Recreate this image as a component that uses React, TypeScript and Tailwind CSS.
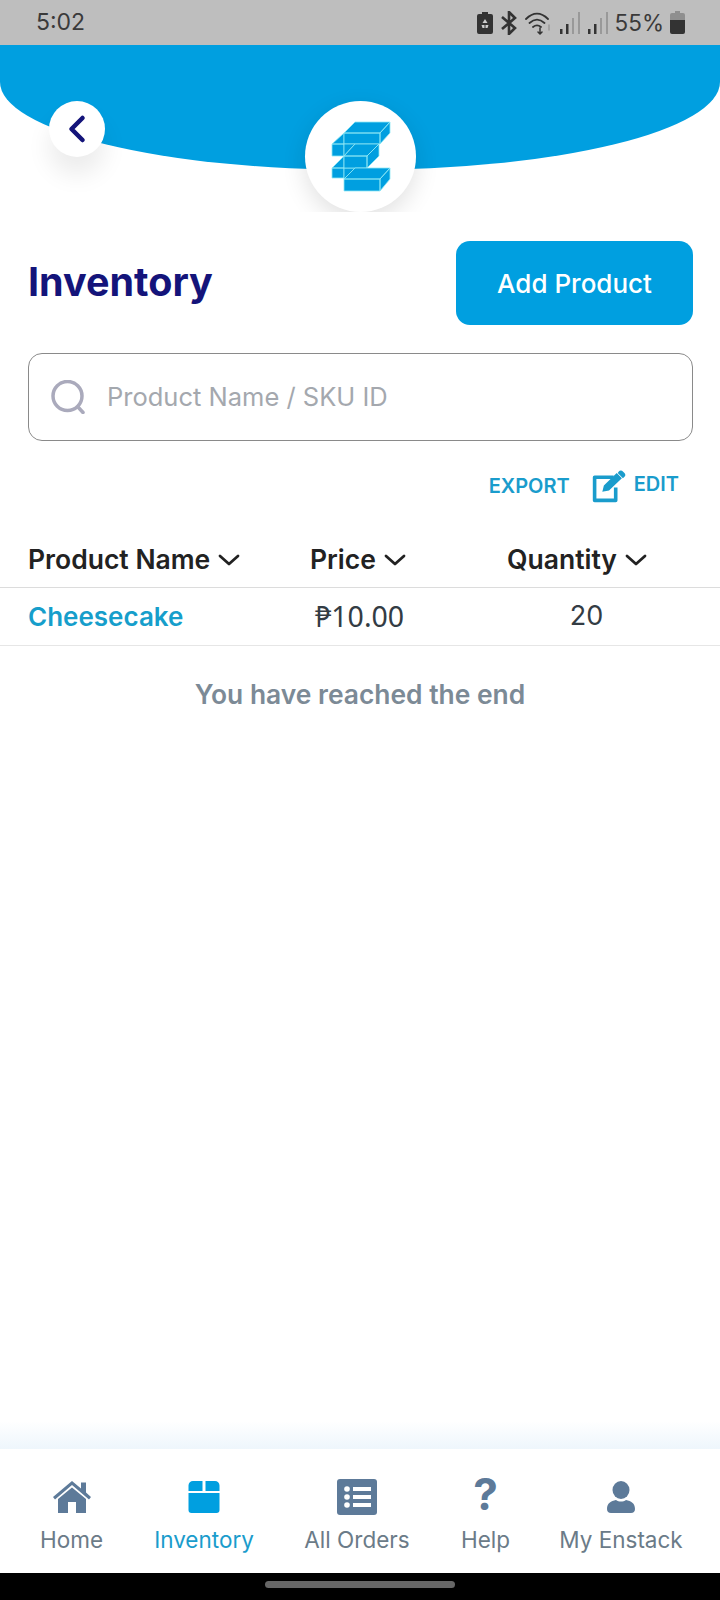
import { ChevronLeft } from 'lucide-react';

const BatterySaverIcon = () => (
  <svg width="16" height="22" viewBox="0 0 16 22">
    <path d="M5 0h6v2h3a2 2 0 0 1 2 2v16a2 2 0 0 1-2 2H2a2 2 0 0 1-2-2V4a2 2 0 0 1 2-2h3z" fill="#333" />
    <path d="M8 7l2.500 4h-5zM4.500 13h3v3h-2zM8.500 13h3l-1 3h-2z" fill="#ccc" />
  </svg>
);

const BluetoothIcon = () => (
  <svg width="20" height="24" viewBox="0 0 20 24" fill="none" stroke="#333" strokeWidth="2.600">
    <path d="M3 6l13 11-6 6V1l6 6L3 18" />
  </svg>
);

const WifiIcon = () => (
  <svg width="28" height="24" viewBox="0 0 28 24" fill="none" stroke="#333" strokeWidth="1.800" strokeLinecap="round">
    <path d="M1 8c7-7 15-7 22 0M4.500 12c5-4.500 10-4.500 15 0M8 16c2.500-2 5.500-2 8 0" />
    <path d="M15 17v6M13 21l2 2 2-2" strokeWidth="1.500" />
    <path d="M24 14v5" stroke="#999" strokeWidth="1.500" />
  </svg>
);

const SignalIcon = () => (
  <svg width="22" height="24" viewBox="0 0 22 24">
    <rect x="1" y="18" width="2.500" height="5" fill="#333" />
    <rect x="7" y="13" width="2.500" height="10" fill="#333" />
    <rect x="13" y="7" width="2" height="16" fill="#999" />
    <rect x="19" y="1" width="2" height="22" fill="#999" />
  </svg>
);

const BatteryIcon = () => (
  <svg width="15" height="23" viewBox="0 0 15 23">
    <path d="M5 0h5v2h3a2 2 0 0 1 2 2v5H0V4a2 2 0 0 1 2-2h3z" fill="#8f8f8f" />
    <path d="M0 9h15v12a2 2 0 0 1-2 2H2a2 2 0 0 1-2-2z" fill="#333" />
  </svg>
);

const LogoIcon = () => (
  <svg width="60" height="72" viewBox="-1 0 60 72" fill="#009fe0" stroke="#8fe9f5" strokeWidth="0.800" strokeLinejoin="round">
    {/* left stubs */}
    <path d="M0 23L12 12V23zM0 23H12V35H0zM0 47L12 35V47zM0 47H12V57H0z" />
    {/* top brick */}
    <path d="M23 1H58L48 12H12zM12 12H48V23H12zM48 12L58 1V12L48 23z" />
    {/* gap fill */}
    <path d="M12 23H23L12 35zM12 47H23L12 58z" />
    {/* middle brick */}
    <path d="M23 23H47L35 35H12zM12 35H35V47H12zM35 35L47 23V35L35 47z" />
    {/* bottom brick */}
    <path d="M23 47H58L48 58H12zM12 58H48V70H12zM48 58L58 47V58L48 70z" />
  </svg>
);

const SearchIcon = () => (
  <svg width="34" height="34" viewBox="0 0 34 34" fill="none" stroke="#aaaabc" strokeWidth="3.500" strokeLinecap="round">
    <circle cx="16.500" cy="16" r="14.500" />
    <path d="M27 27l5 5.500" />
  </svg>
);

const SortChevron = () => (
  <svg width="22" height="12" viewBox="0 0 22 12" fill="none" stroke="#222" strokeWidth="2.800" strokeLinecap="round" strokeLinejoin="round">
    <path d="M2 2l9 8 9-8" />
  </svg>
);

const InventoryIcon = () => (
  <svg width="32" height="32" viewBox="0 0 32 32" fill="#009fe0">
    <path d="M5 0h9.500v10H0.500V4.500A4.500 4.500 0 0 1 5 0zM17.500 0H27a4.500 4.500 0 0 1 4.500 4.500V10H17.500z" />
    <path d="M0.500 12h31v17a3 3 0 0 1-3 3h-25a3 3 0 0 1-3-3z" />
  </svg>
);

const OrdersIcon = () => (
  <svg width="40" height="36" viewBox="0 0 40 36" className="-mb-[2px]">
    <rect width="40" height="36" rx="3" fill="#5d7a99" />
    <circle cx="10" cy="10" r="2.800" fill="#fff" />
    <circle cx="10" cy="18" r="2.800" fill="#fff" />
    <circle cx="10" cy="26" r="2.800" fill="#fff" />
    <rect x="16" y="8" width="18" height="4" fill="#fff" />
    <rect x="16" y="16" width="18" height="4" fill="#fff" />
    <rect x="16" y="24" width="18" height="4" fill="#fff" />
  </svg>
);

const UserIcon = () => (
  <svg width="28" height="32" viewBox="0 0 28 32" fill="#5d7a99">
    <ellipse cx="14" cy="9" rx="8.500" ry="9" />
    <path d="M0 28c0-6 4-8 9-9 3 2 7 2 10 0 5 1 9 3 9 9 0 2.500-1.500 4-4 4H4c-2.500 0-4-1.500-4-4z" />
  </svg>
);

const HomeIcon = () => (
  <svg width="40" height="32" viewBox="0 0 40 32" fill="#5d7a99">
    <path d="M1 16L20 0l9 7.500V1.500h5v10l5 4.500-2 2.500L20 4 3 18.500z" />
    <path d="M6 18L20 6.500 34 18v14H24V21h-8v11H6z" />
  </svg>
);

const EditIcon = () => (
  <svg width="35" height="33" viewBox="0 0 34 32" fill="none">
    <path d="M22 7H3.500v22.500H24V17" stroke="#1a9ccc" strokeWidth="3.500" strokeLinejoin="round" />
    <path d="M11 21l1.500-6L25 3l5 5-12.500 12zM27 1.500a2.500 2.500 0 0 1 4 0l1.500 1.500a2.500 2.500 0 0 1 0 3.500L31 8l-5-5z" fill="#1a9ccc" />
  </svg>
);

const HeaderColumn = ({ label, className }: { label: string; className: string }) => (
  <div className={`flex items-center gap-[8px] ${className}`}>
    <span className="text-[26.500px] font-semibold text-[#222]">{label}</span>
    <SortChevron />
  </div>
);

const NavItem = ({ label, icon, active, className }: { label: string; icon: React.ReactNode; active?: boolean; className: string }) => (
  <div className={`flex flex-col items-center ${className}`}>
    <div className="flex h-[38px] items-end">{icon}</div>
    <span className={`mt-[11px] text-[22.500px] leading-[32px] ${active ? 'text-[#1a9ccc]' : 'text-[#6b7b88]'}`}>{label}</span>
  </div>
);

export default function App() {
  return (
    <div className="relative flex h-[1600px] w-[720px] flex-col overflow-hidden bg-white font-['Inter',sans-serif]">
      {/* status bar */}
      <div className="flex h-[45px] flex-none items-center justify-between bg-[#bebebe] pl-[36px] pr-[35px]">
        <span className="text-[23px] text-[#3a3a3a]">5:02</span>
        <div className="flex items-center gap-[6px]">
          <BatterySaverIcon />
          <BluetoothIcon />
          <WifiIcon />
          <SignalIcon />
          <SignalIcon />
          <span className="text-[22.500px] text-[#3a3a3a]">55%</span>
          <BatteryIcon />
        </div>
      </div>

      {/* curved header */}
      <div className="relative h-[167px] flex-none overflow-hidden">
        <div className="h-[125px] bg-[#009fe0] [border-radius:0_0_360px_360px/0_0_88px_88px]" />
        <div className="absolute left-[49px] top-[56px] flex h-[56px] w-[56px] items-center justify-center rounded-full bg-white shadow-[0_18px_24px_rgba(0,0,0,0.08)]">
          <ChevronLeft size={44} strokeWidth={2.500} className="text-[#14147a]" />
        </div>
        <div className="absolute left-[305px] top-[56px] flex h-[111px] w-[111px] items-center justify-center rounded-full bg-white shadow-[0_8px_24px_rgba(0,0,0,0.12)]">
          <LogoIcon />
        </div>
      </div>

      {/* title row */}
      <div className="mt-[29px] flex items-center justify-between pl-[28px] pr-[27px]">
        <h1 className="text-[39.500px] font-bold text-[#14147a]">Inventory</h1>
        <button className="flex h-[84px] w-[237px] items-center justify-center rounded-[14px] bg-[#009fe0] text-[26px] font-medium text-white">
          Add Product
        </button>
      </div>

      {/* search */}
      <div className="ml-[28px] mr-[27px] mt-[28px] flex h-[88px] items-center gap-[22px] rounded-[14px] border border-[#8a8a8a] pl-[22px]">
        <SearchIcon />
        <span className="text-[25.500px] text-[#a4a8ae]">Product Name / SKU ID</span>
      </div>

      {/* actions */}
      <div className="mt-[28px] flex items-center justify-end pr-[41px]">
        <span className="text-[20px] font-semibold text-[#1a9ccc]">EXPORT</span>
        <span className="ml-[21px]"><EditIcon /></span>
        <span className="mb-[4px] ml-[8px] text-[20px] font-semibold text-[#1a9ccc]">EDIT</span>
      </div>

      {/* table */}
      <div className="mt-[29px] flex h-[56px] items-center border-b border-[#dcdcdc] pl-[28px]">
        <HeaderColumn label="Product Name" className="w-[282px]" />
        <HeaderColumn label="Price" className="w-[197px]" />
        <HeaderColumn label="Quantity" className="" />
      </div>
      <div className="flex h-[58px] items-center border-b border-[#e6e6e6] pl-[28px]">
        <span className="w-[287px] text-[26px] font-semibold text-[#169ecb]">Cheesecake</span>
        <span className="w-[210px] font-['Noto_Sans',sans-serif] text-[28.500px] text-[#333c44]">₱10.00</span>
        <span className="w-[123px] text-center text-[27px] text-[#333c44]">20</span>
      </div>
      <p className="mt-[29px] text-center text-[26.400px] font-semibold text-[#7c8a96]">You have reached the end</p>

      {/* bottom nav */}
      <div className="mt-auto h-[28px] bg-gradient-to-b from-white to-[#eef6fc]" />
      <div className="flex h-[124px] flex-none items-start pt-[26px]">
        <NavItem label="Home" icon={<HomeIcon />} className="w-[143px]" />
        <NavItem label="Inventory" icon={<InventoryIcon />} active className="w-[122px]" />
        <NavItem label="All Orders" icon={<OrdersIcon />} className="w-[184px]" />
        <NavItem label="Help" icon={<span className="text-[44px] font-bold leading-[38px] text-[#5d7a99]">?</span>} className="w-[73px]" />
        <NavItem label="My Enstack" icon={<UserIcon />} className="w-[198px]" />
      </div>
      <div className="flex h-[27px] flex-none items-start justify-center bg-black pt-[8px]">
        <div className="h-[7px] w-[190px] rounded-full bg-[#666]" />
      </div>
    </div>
  );
}
